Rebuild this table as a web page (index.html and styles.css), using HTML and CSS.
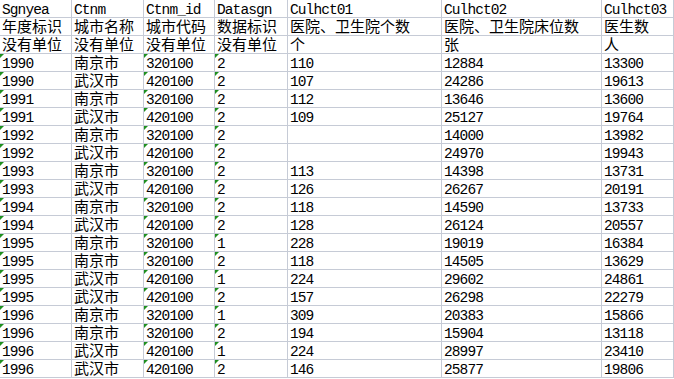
FILE: index.html
```html
<!DOCTYPE html>
<html lang="zh-CN">
<head>
    <meta charset="UTF-8">
    <meta name="viewport" content="width=device-width, initial-scale=1.0">
    <title>城市卫生数据</title>
    <link rel="stylesheet" href="styles.css">
</head>
<body>
    <div class="sheet">
        <!-- field names -->
        <div class="cell">Sgnyea</div><div class="cell">Ctnm</div><div class="cell">Ctnm_id</div><div class="cell">Datasgn</div><div class="cell">Culhct01</div><div class="cell">Culhct02</div><div class="cell">Culhct03</div>
        <!-- labels -->
        <div class="cell zh">年度标识</div><div class="cell zh">城市名称</div><div class="cell zh">城市代码</div><div class="cell zh">数据标识</div><div class="cell zh">医院、卫生院个数</div><div class="cell zh">医院、卫生院床位数</div><div class="cell zh">医生数</div>
        <!-- units -->
        <div class="cell zh">没有单位</div><div class="cell zh">没有单位</div><div class="cell zh">没有单位</div><div class="cell zh">没有单位</div><div class="cell zh">个</div><div class="cell zh">张</div><div class="cell zh">人</div>

        <div class="cell txt">1990</div><div class="cell zh">南京市</div><div class="cell txt">320100</div><div class="cell txt">2</div><div class="cell">110</div><div class="cell">12884</div><div class="cell">13300</div>
        <div class="cell txt">1990</div><div class="cell zh">武汉市</div><div class="cell txt">420100</div><div class="cell txt">2</div><div class="cell">107</div><div class="cell">24286</div><div class="cell">19613</div>
        <div class="cell txt">1991</div><div class="cell zh">南京市</div><div class="cell txt">320100</div><div class="cell txt">2</div><div class="cell">112</div><div class="cell">13646</div><div class="cell">13600</div>
        <div class="cell txt">1991</div><div class="cell zh">武汉市</div><div class="cell txt">420100</div><div class="cell txt">2</div><div class="cell">109</div><div class="cell">25127</div><div class="cell">19764</div>
        <div class="cell txt">1992</div><div class="cell zh">南京市</div><div class="cell txt">320100</div><div class="cell txt">2</div><div class="cell"></div><div class="cell">14000</div><div class="cell">13982</div>
        <div class="cell txt">1992</div><div class="cell zh">武汉市</div><div class="cell txt">420100</div><div class="cell txt">2</div><div class="cell"></div><div class="cell">24970</div><div class="cell">19943</div>
        <div class="cell txt">1993</div><div class="cell zh">南京市</div><div class="cell txt">320100</div><div class="cell txt">2</div><div class="cell">113</div><div class="cell">14398</div><div class="cell">13731</div>
        <div class="cell txt">1993</div><div class="cell zh">武汉市</div><div class="cell txt">420100</div><div class="cell txt">2</div><div class="cell">126</div><div class="cell">26267</div><div class="cell">20191</div>
        <div class="cell txt">1994</div><div class="cell zh">南京市</div><div class="cell txt">320100</div><div class="cell txt">2</div><div class="cell">118</div><div class="cell">14590</div><div class="cell">13733</div>
        <div class="cell txt">1994</div><div class="cell zh">武汉市</div><div class="cell txt">420100</div><div class="cell txt">2</div><div class="cell">128</div><div class="cell">26124</div><div class="cell">20557</div>
        <div class="cell txt">1995</div><div class="cell zh">南京市</div><div class="cell txt">320100</div><div class="cell txt">1</div><div class="cell">228</div><div class="cell">19019</div><div class="cell">16384</div>
        <div class="cell txt">1995</div><div class="cell zh">南京市</div><div class="cell txt">320100</div><div class="cell txt">2</div><div class="cell">118</div><div class="cell">14505</div><div class="cell">13629</div>
        <div class="cell txt">1995</div><div class="cell zh">武汉市</div><div class="cell txt">420100</div><div class="cell txt">1</div><div class="cell">224</div><div class="cell">29602</div><div class="cell">24861</div>
        <div class="cell txt">1995</div><div class="cell zh">武汉市</div><div class="cell txt">420100</div><div class="cell txt">2</div><div class="cell">157</div><div class="cell">26298</div><div class="cell">22279</div>
        <div class="cell txt">1996</div><div class="cell zh">南京市</div><div class="cell txt">320100</div><div class="cell txt">1</div><div class="cell">309</div><div class="cell">20383</div><div class="cell">15866</div>
        <div class="cell txt">1996</div><div class="cell zh">南京市</div><div class="cell txt">320100</div><div class="cell txt">2</div><div class="cell">194</div><div class="cell">15904</div><div class="cell">13118</div>
        <div class="cell txt">1996</div><div class="cell zh">武汉市</div><div class="cell txt">420100</div><div class="cell txt">1</div><div class="cell">224</div><div class="cell">28997</div><div class="cell">23410</div>
        <div class="cell txt">1996</div><div class="cell zh">武汉市</div><div class="cell txt">420100</div><div class="cell txt">2</div><div class="cell">146</div><div class="cell">25877</div><div class="cell">19806</div>
    </div>
</body>
</html>
```

FILE: styles.css
```css
body {
    margin: 0;
    background-color: #fff;
    color: #000;
    overflow: hidden;
}
.sheet {
    display: grid;
    grid-template-columns: 72px 72px 71px 73px 154px 160px 72px;
    grid-auto-rows: 18px;
}
.cell {
    position: relative;
    box-sizing: border-box;
    padding-left: 2px;
    border-right: 1px solid #c6cbd6;
    border-bottom: 1px solid #c6cbd6;
    font-family: "Liberation Mono", monospace;
    font-size: 14.5px;
    letter-spacing: -0.9px;
    line-height: 20px;
    white-space: nowrap;
}
/* chinese text is full width */
.zh {
    font-family: "Noto Sans CJK SC", sans-serif;
    font-size: 15px;
    letter-spacing: 0;
    line-height: 16px;
}
/* number stored as text marker */
.txt::before {
    content: "";
    position: absolute;
    top: 0;
    left: 0;
    border-top: 4px solid #1f8f1f;
    border-right: 4px solid transparent;
}
```
